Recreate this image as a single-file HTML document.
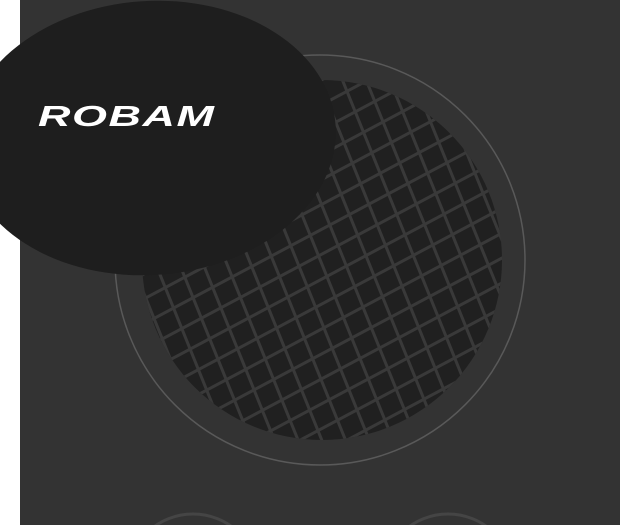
<!DOCTYPE html>
<html><head><style>
html,body{margin:0;padding:0;width:640px;height:525px;overflow:hidden;background:#fff}
svg{position:absolute;left:0;top:0}
.logo{position:absolute;left:38px;top:103px;font-family:"Liberation Sans",sans-serif;font-weight:bold;font-style:italic;font-size:29px;color:#fff;letter-spacing:1px;transform:scaleX(1.55);transform-origin:left top;line-height:1;white-space:nowrap}
</style></head><body>
<svg width="640" height="525" viewBox="0 0 640 525">
<defs>
<pattern id="pa" width="22" height="22" patternUnits="userSpaceOnUse" patternTransform="rotate(-28)">
<rect x="0" y="0" width="22" height="3" fill="#393939"/>
</pattern>
<pattern id="pb" width="22" height="22" patternUnits="userSpaceOnUse" patternTransform="rotate(-22)">
<rect x="0" y="0" width="3" height="22" fill="#393939"/>
</pattern>
<clipPath id="c"><circle cx="322" cy="260" r="180"/></clipPath>
</defs>
<rect x="20" y="0" width="600" height="525" fill="#333"/>
<circle cx="320" cy="260" r="205" fill="none" stroke="#595959" stroke-width="1.5"/>
<circle cx="322" cy="260" r="180" fill="#202020"/>
<g clip-path="url(#c)">
<rect x="100" y="60" width="450" height="420" fill="url(#pa)"/>
<rect x="100" y="60" width="450" height="420" fill="url(#pb)"/>
</g>
<circle cx="193" cy="580" r="66" fill="none" stroke="#454545" stroke-width="3"/>
<circle cx="448" cy="580" r="66" fill="none" stroke="#454545" stroke-width="3"/>
<ellipse cx="150" cy="138" rx="186" ry="137" transform="rotate(-4 150 138)" fill="#1e1e1e"/>
</svg>
<div class="logo">ROBAM</div>
</body></html>
